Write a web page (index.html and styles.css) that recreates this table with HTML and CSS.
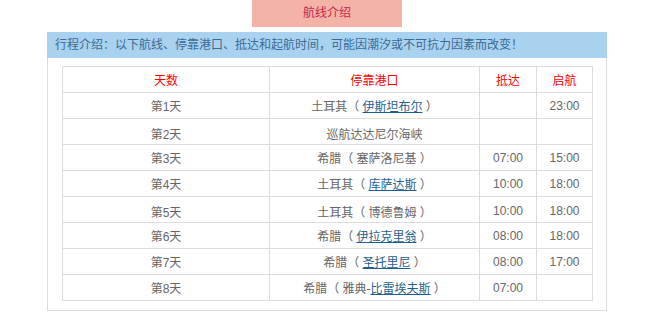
FILE: index.html
```html
<!DOCTYPE html>
<html lang="zh">
<head>
<meta charset="utf-8">
<title>航线介绍</title>
<link rel="stylesheet" href="styles.css">
</head>
<body>
<div class="page">
  <div class="tab-row"><div class="tab">航线介绍</div></div>
  <div class="panel">
    <div class="notice">行程介绍：以下航线、停靠港口、抵达和起航时间，可能因潮汐或不可抗力因素而改变！</div>
    <table class="route">
      <colgroup><col class="c1"><col class="c2"><col class="c3"><col class="c4"></colgroup>
      <thead>
        <tr><th>天数</th><th>停靠港口</th><th>抵达</th><th>启航</th></tr>
      </thead>
      <tbody>
        <tr><td>第1天</td><td>土耳其（ <a href="#">伊斯坦布尔</a> ）</td><td></td><td>23:00</td></tr>
        <tr><td class="low">第2天</td><td class="low">巡航达达尼尔海峡</td><td></td><td></td></tr>
        <tr><td>第3天</td><td>希腊（ 塞萨洛尼基 ）</td><td>07:00</td><td>15:00</td></tr>
        <tr><td>第4天</td><td>土耳其（ <a href="#">库萨达斯</a> ）</td><td>10:00</td><td>18:00</td></tr>
        <tr><td class="low">第5天</td><td class="low">土耳其（ 博德鲁姆 ）</td><td class="low">10:00</td><td class="low">18:00</td></tr>
        <tr><td>第6天</td><td>希腊（ <a href="#">伊拉克里翁</a> ）</td><td>08:00</td><td>18:00</td></tr>
        <tr><td>第7天</td><td>希腊（ <a href="#">圣托里尼</a> ）</td><td>08:00</td><td>17:00</td></tr>
        <tr><td>第8天</td><td>希腊（ 雅典-<a href="#">比雷埃夫斯</a> ）</td><td>07:00</td><td></td></tr>
      </tbody>
    </table>
  </div>
</div>
</body>
</html>
```
FILE: styles.css
```css
html, body {
  margin: 0;
  padding: 0;
  background: #fff;
}
body {
  font-family: "Liberation Sans", "Noto Sans CJK SC", sans-serif;
  font-size: 12px;
  color: #666;
}
.page {
  width: 560px;
  margin-left: 47px;
}
.tab-row {
  display: flex;
  justify-content: flex-start;
  padding-left: 205px;
}
.tab {
  width: 150px;
  height: 27px;
  line-height: 27px;
  text-align: center;
  background: #f4b3a7;
  color: #c5274a;
  font-size: 12px;
}
.panel {
  margin-top: 5px;
  border: 1px solid #dcdcdc;
  border-top: none;
  padding-bottom: 9px;
}
.notice {
  height: 26px;
  line-height: 26px;
  background: #a9d2ee;
  color: #3b6b94;
  padding-left: 8px;
  margin: 0 -1px;
  font-size: 12px;
  white-space: nowrap;
}
.route {
  margin: 8px 0 0 14px;
  width: 531px;
  border-collapse: collapse;
  table-layout: fixed;
}
.c1 { width: 207px; }
.c2 { width: 210px; }
.c3 { width: 57px; }
.c4 { width: 56px; }
.route th,
.route td {
  border: 1px solid #dcdcdc;
  height: 25px;
  padding: 0;
  text-align: center;
  vertical-align: middle;
  font-weight: normal;
  white-space: nowrap;
}
.route th {
  color: #f00;
}
.route td.low {
  padding-top: 3px;
  height: 22px;
}
.route a {
  color: #1f5f8f;
  text-decoration: underline;
}
```
